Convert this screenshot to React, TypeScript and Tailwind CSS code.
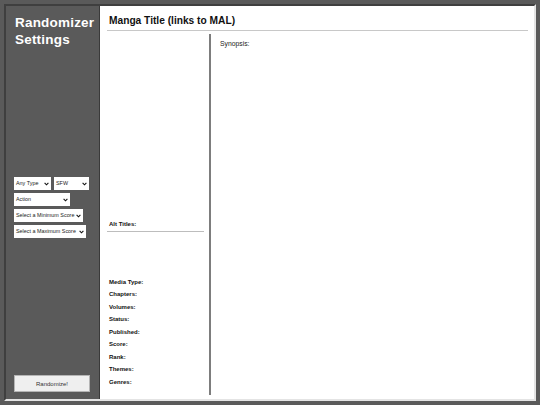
const font = { fontFamily: '"Liberation Sans", Arial, sans-serif' }

function Chevron() {
  return (
    <svg width="5" height="4" viewBox="0 0 5 4" className="shrink-0">
      <polyline points="0.6,0.8 2.5,2.8 4.4,0.8" fill="none" stroke="#111" strokeWidth="1.1" />
    </svg>
  )
}

function FakeSelect({ label, width }: { label: string; width: string }) {
  return (
    <div className={`${width} h-[13px] bg-white flex items-center justify-between pl-[2px] pr-[2px] text-[5.4px] text-[#222] leading-none`}>
      <span className="whitespace-nowrap">{label}</span>
      <Chevron />
    </div>
  )
}

const fields = ['Media Type:', 'Chapters:', 'Volumes:', 'Status:', 'Published:', 'Score:', 'Rank:', 'Themes:', 'Genres:']

export default function App() {
  return (
    <div style={font} className="w-[540px] h-[405px] bg-[#5a5a5a] p-[4px]">
      <div className="h-full flex border-2 border-t-[#3f3f3f] border-l-[#3f3f3f] border-b-[#e4e4e4] border-r-[#e4e4e4]">
        {/* sidebar */}
        <div className="w-[94px] bg-[#5a5a5a] border-r border-[#3a3a3a] flex flex-col pl-[8px] pt-[8px] pb-[7px]">
          <h1 className="text-white font-bold text-[13.5px] leading-[17px] pl-[1px] tracking-[0.2px]">
            Randomizer
            <br />
            Settings
          </h1>
          <div className="mt-[129px] flex flex-col gap-[3px]">
            <div className="flex gap-[3px]">
              <FakeSelect label="Any Type" width="w-[37px]" />
              <FakeSelect label="SFW" width="w-[35px]" />
            </div>
            <FakeSelect label="Action" width="w-[56px]" />
            <FakeSelect label="Select a Minimum Score" width="w-[69px]" />
            <FakeSelect label="Select a Maximum Score" width="w-[72px]" />
          </div>
          <div className="flex-1" />
          <button className="w-[76px] h-[17px] bg-[#efefef] border border-[#b5b5b5] text-[6px] text-[#333] leading-none">
            Randomize!
          </button>
        </div>

        {/* main */}
        <div className="flex-1 bg-white flex flex-col pl-[7px] pr-[6px] pt-[9px] pb-[4px]">
          <h2 className="font-bold text-[10.2px] leading-[12px] text-[#111] pl-[2px]">Manga Title (links to MAL)</h2>
          <div className="mt-[3px] h-px bg-[#c8c8c8]" />
          <div className="flex-1 flex mt-[3px]">
            <div className="w-[97px] flex flex-col">
              <div className="h-[186px]" />
              <div className="font-bold text-[6px] leading-[8px] text-[#111] pl-[2px]">Alt Titles:</div>
              <div className="mt-[3px] h-px bg-[#bdbdbd]" />
              <div className="flex-1" />
              <div className="flex flex-col pb-[7px] pl-[2px]">
                {fields.map((f) => (
                  <div key={f} className="font-bold text-[6px] leading-[12.5px] text-[#111]">
                    {f}
                  </div>
                ))}
              </div>
            </div>
            <div className="ml-[5px] w-[2px] bg-[#7d7d7d]" />
            <div className="flex-1 pl-[9px] pt-[6px]">
              <p className="text-[6.8px] leading-[8px] text-[#222]">Synopsis:</p>
            </div>
          </div>
        </div>
      </div>
    </div>
  )
}
